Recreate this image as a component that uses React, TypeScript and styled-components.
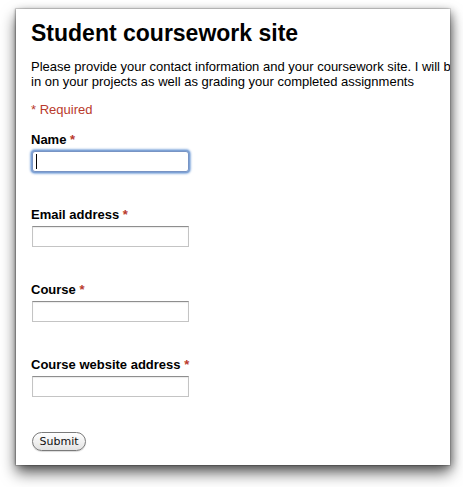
import React from "react";
import styled, { createGlobalStyle } from "styled-components";

const Global = createGlobalStyle`
  html, body { margin: 0; padding: 0; background: #ffffff; }
  body { font-family: "Liberation Sans", Arial, sans-serif; }
`;

const Page = styled.div`
  width: 463px;
  height: 487px;
  padding: 9px 13px 0 16px;
  box-sizing: border-box;
`;

const Panel = styled.div`
  width: 434px;
  height: 456px;
  background: #fff;
  box-sizing: border-box;
  padding: 10px 0 0 15px;
  overflow: hidden;
  box-shadow: 0 0 0 1px rgba(0, 0, 0, 0.1), -1px 0 2px rgba(0, 0, 0, 0.25),
    0 8px 14px rgba(0, 0, 0, 0.6), 2px 2px 8px rgba(0, 0, 0, 0.3);
`;

const Title = styled.h1`
  margin: 0;
  font-size: 23px;
  line-height: 28px;
  font-weight: bold;
  color: #000;
  white-space: nowrap;
`;

const Description = styled.p`
  margin: 12px 0 0;
  font-size: 13px;
  line-height: 15px;
  color: #000;
  white-space: nowrap;
`;

const RequiredNote = styled.div`
  margin-top: 13px;
  font-size: 13px;
  line-height: 15px;
  color: #b93a2c;
`;

const Form = styled.form`
  margin-top: 15px;
  display: flex;
  flex-direction: column;
`;

const Field = styled.div`
  display: flex;
  flex-direction: column;
  align-items: flex-start;
  margin-bottom: 35px;
`;

const Label = styled.label`
  font-size: 13px;
  line-height: 15px;
  font-weight: bold;
  color: #000;
  margin-bottom: 4px;
`;

const Star = styled.span`
  color: #b93a2c;
`;

const InputWrap = styled.div`
  position: relative;
  margin-left: 1px;
`;

const TextInput = styled.input<{ $focused?: boolean }>`
  display: block;
  width: 157px;
  height: 21px;
  box-sizing: border-box;
  margin: 0;
  padding: 0 3px;
  font-family: "Liberation Sans", Arial, sans-serif;
  font-size: 13px;
  background: #fff;
  outline: none;
  border: 1px solid #c4c4c4;
  border-top-color: #8e8e8e;
  border-radius: ${(p) => (p.$focused ? "3px" : "0")};
  box-shadow: ${(p) =>
    p.$focused
      ? "0 0 0 1px #7fa3d6, 0 0 2px 2px rgba(110, 155, 215, 0.75)"
      : "inset 0 1px 1px rgba(0,0,0,0.08)"};
  ${(p) => (p.$focused ? "border-color: #7894c4;" : "")}
`;

const Caret = styled.span`
  position: absolute;
  left: 4px;
  top: 3px;
  width: 1px;
  height: 15px;
  background: #000;
`;

const SubmitButton = styled.button`
  align-self: flex-start;
  margin-left: 1px;
  width: 54px;
  height: 19px;
  padding: 0;
  border: 1px solid #7a7a7a;
  border-radius: 10px;
  background: linear-gradient(#ffffff, #f1f1f1 50%, #e2e2e2);
  font-family: "DejaVu Sans", "Liberation Sans", sans-serif;
  font-size: 11px;
  line-height: 17px;
  color: #111;
  box-shadow: 0 1px 1px rgba(0, 0, 0, 0.15);
`;

const fields = [
  { id: "name", label: "Name", focused: true },
  { id: "email", label: "Email address" },
  { id: "course", label: "Course" },
  { id: "site", label: "Course website address" },
];

export default function App() {
  return (
    <>
      <Global />
      <Page>
        <Panel>
          <Title>Student coursework site</Title>
          <Description>
            Please provide your contact information and your coursework site. I will be checking
            <br />
            in on your projects as well as grading your completed assignments
          </Description>
          <RequiredNote>* Required</RequiredNote>
          <Form onSubmit={(e) => e.preventDefault()}>
            {fields.map((f) => (
              <Field key={f.id}>
                <Label htmlFor={f.id}>
                  {f.label} <Star>*</Star>
                </Label>
                <InputWrap>
                  <TextInput id={f.id} type="text" $focused={f.focused} />
                  {f.focused && <Caret />}
                </InputWrap>
              </Field>
            ))}
            <SubmitButton type="submit">Submit</SubmitButton>
          </Form>
        </Panel>
      </Page>
    </>
  );
}
